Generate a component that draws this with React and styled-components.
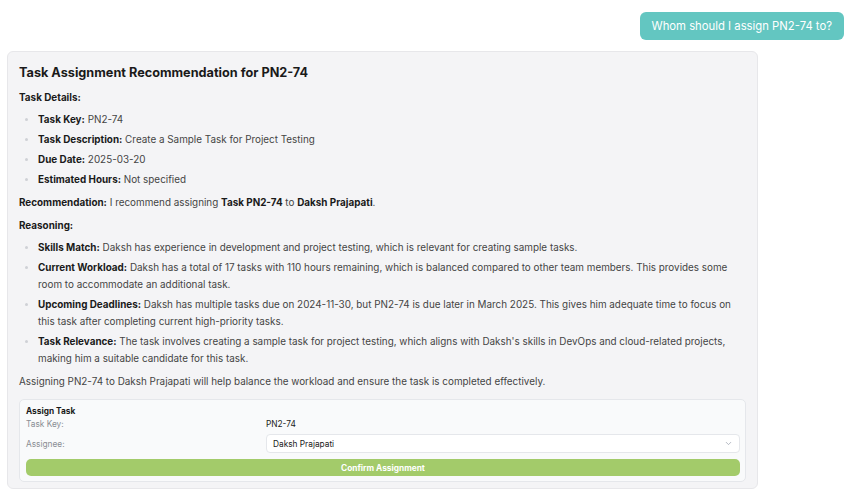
import React from "react";
import styled, { createGlobalStyle } from "styled-components";

const GlobalStyle = createGlobalStyle`
  html, body {
    margin: 0;
    padding: 0;
    background: #ffffff;
    font-family: Inter, "Noto Sans", sans-serif;
    color: #1f2937;
  }
`;

const Page = styled.div`
  display: flex;
  flex-direction: column;
  padding: 12px 4px 0 7px;
  gap: 11px;
`;

const UserRow = styled.div`
  display: flex;
  justify-content: flex-end;
`;

const UserBubble = styled.div`
  background: #63c6c1;
  color: #ffffff;
  font-size: 11.3px;
  padding: 0 12px;
  height: 28px;
  line-height: 28px;
  border-radius: 6px;
`;

const Card = styled.div`
  width: 751px;
  box-sizing: border-box;
  background: #f4f4f6;
  border: 1px solid #e7e7ea;
  border-radius: 6px;
  padding: 12px 11px 6px 11px;
  font-size: 9.9px;
  color: #444;
  line-height: 17px;
`;

const Title = styled.h2`
  margin: 0 0 7px;
  font-size: 12.7px;
  line-height: 18px;
  font-weight: 700;
  color: #1a1a1a;
`;

const Heading = styled.p`
  margin: 0 0 5px;
  font-weight: 700;
  color: #1a1a1a;
`;

const Para = styled.p`
  margin: 0 0 6px;
  b {
    color: #1a1a1a;
  }
`;

const List = styled.ul`
  margin: 0 0 6px;
  padding: 0 0 0 19px;
  list-style: none;
`;

const Item = styled.li`
  position: relative;
  margin-bottom: 3px;
  b {
    color: #1a1a1a;
  }
  &::before {
    content: "";
    position: absolute;
    left: -13px;
    top: 7px;
    width: 3px;
    height: 3px;
    border-radius: 50%;
    background: #cfd1d6;
  }
`;

const AssignBox = styled.div`
  margin-top: 9px;
  background: #f9fafb;
  border: 1px solid #e5e7eb;
  border-radius: 5px;
  padding: 5px 5px 5px 6px;
  font-size: 8.3px;
  line-height: 12px;
`;

const AssignTitle = styled.div`
  font-weight: 700;
  color: #1a1a1a;
  margin-bottom: 1px;
`;

const FieldRow = styled.div`
  display: grid;
  grid-template-columns: 240px 1fr;
  align-items: center;
  margin-bottom: ${({ $gap }) => $gap || 0}px;
`;

const Label = styled.span`
  color: #8a8d93;
`;

const Value = styled.span`
  color: #1a1a1a;
`;

const SelectBox = styled.div`
  display: flex;
  justify-content: space-between;
  align-items: center;
  height: 19px;
  box-sizing: border-box;
  padding: 0 6px;
  background: #ffffff;
  border: 1px solid #e5e7eb;
  border-radius: 4px;
  color: #1a1a1a;
`;

const ConfirmButton = styled.button`
  display: block;
  width: 100%;
  height: 17px;
  border: none;
  border-radius: 5px;
  background: #a3cb6a;
  color: #ffffff;
  font-family: inherit;
  font-size: 8.3px;
  font-weight: 700;
  padding: 0;
`;

export default function App() {
  return (
    <>
      <GlobalStyle />
      <Page>
        <UserRow>
          <UserBubble>Whom should I assign PN2-74 to?</UserBubble>
        </UserRow>
        <Card>
          <Title>Task Assignment Recommendation for PN2-74</Title>
          <Heading>Task Details:</Heading>
          <List>
            <Item><b>Task Key:</b> PN2-74</Item>
            <Item><b>Task Description:</b> Create a Sample Task for Project Testing</Item>
            <Item><b>Due Date:</b> 2025-03-20</Item>
            <Item><b>Estimated Hours:</b> Not specified</Item>
          </List>
          <Para>
            <b>Recommendation:</b> I recommend assigning <b>Task PN2-74</b> to <b>Daksh Prajapati</b>.
          </Para>
          <Heading>Reasoning:</Heading>
          <List>
            <Item>
              <b>Skills Match:</b> Daksh has experience in development and project testing, which is relevant for creating sample tasks.
            </Item>
            <Item>
              <b>Current Workload:</b> Daksh has a total of 17 tasks with 110 hours remaining, which is balanced compared to other team members. This provides some room to accommodate an additional task.
            </Item>
            <Item>
              <b>Upcoming Deadlines:</b> Daksh has multiple tasks due on 2024-11-30, but PN2-74 is due later in March 2025. This gives him adequate time to focus on this task after completing current high-priority tasks.
            </Item>
            <Item>
              <b>Task Relevance:</b> The task involves creating a sample task for project testing, which aligns with Daksh's skills in DevOps and cloud-related projects, making him a suitable candidate for this task.
            </Item>
          </List>
          <Para>
            Assigning PN2-74 to Daksh Prajapati will help balance the workload and ensure the task is completed effectively.
          </Para>
          <AssignBox>
            <AssignTitle>Assign Task</AssignTitle>
            <FieldRow $gap={4}>
              <Label>Task Key:</Label>
              <Value>PN2-74</Value>
            </FieldRow>
            <FieldRow $gap={6}>
              <Label>Assignee:</Label>
              <SelectBox>
                <span>Daksh Prajapati</span>
                <svg width="9" height="9" viewBox="0 0 24 24" fill="none" stroke="#9ca3af" strokeWidth="2" strokeLinecap="round" strokeLinejoin="round">
                  <path d="m6 9 6 6 6-6" />
                </svg>
              </SelectBox>
            </FieldRow>
            <ConfirmButton>Confirm Assignment</ConfirmButton>
          </AssignBox>
        </Card>
      </Page>
    </>
  );
}
